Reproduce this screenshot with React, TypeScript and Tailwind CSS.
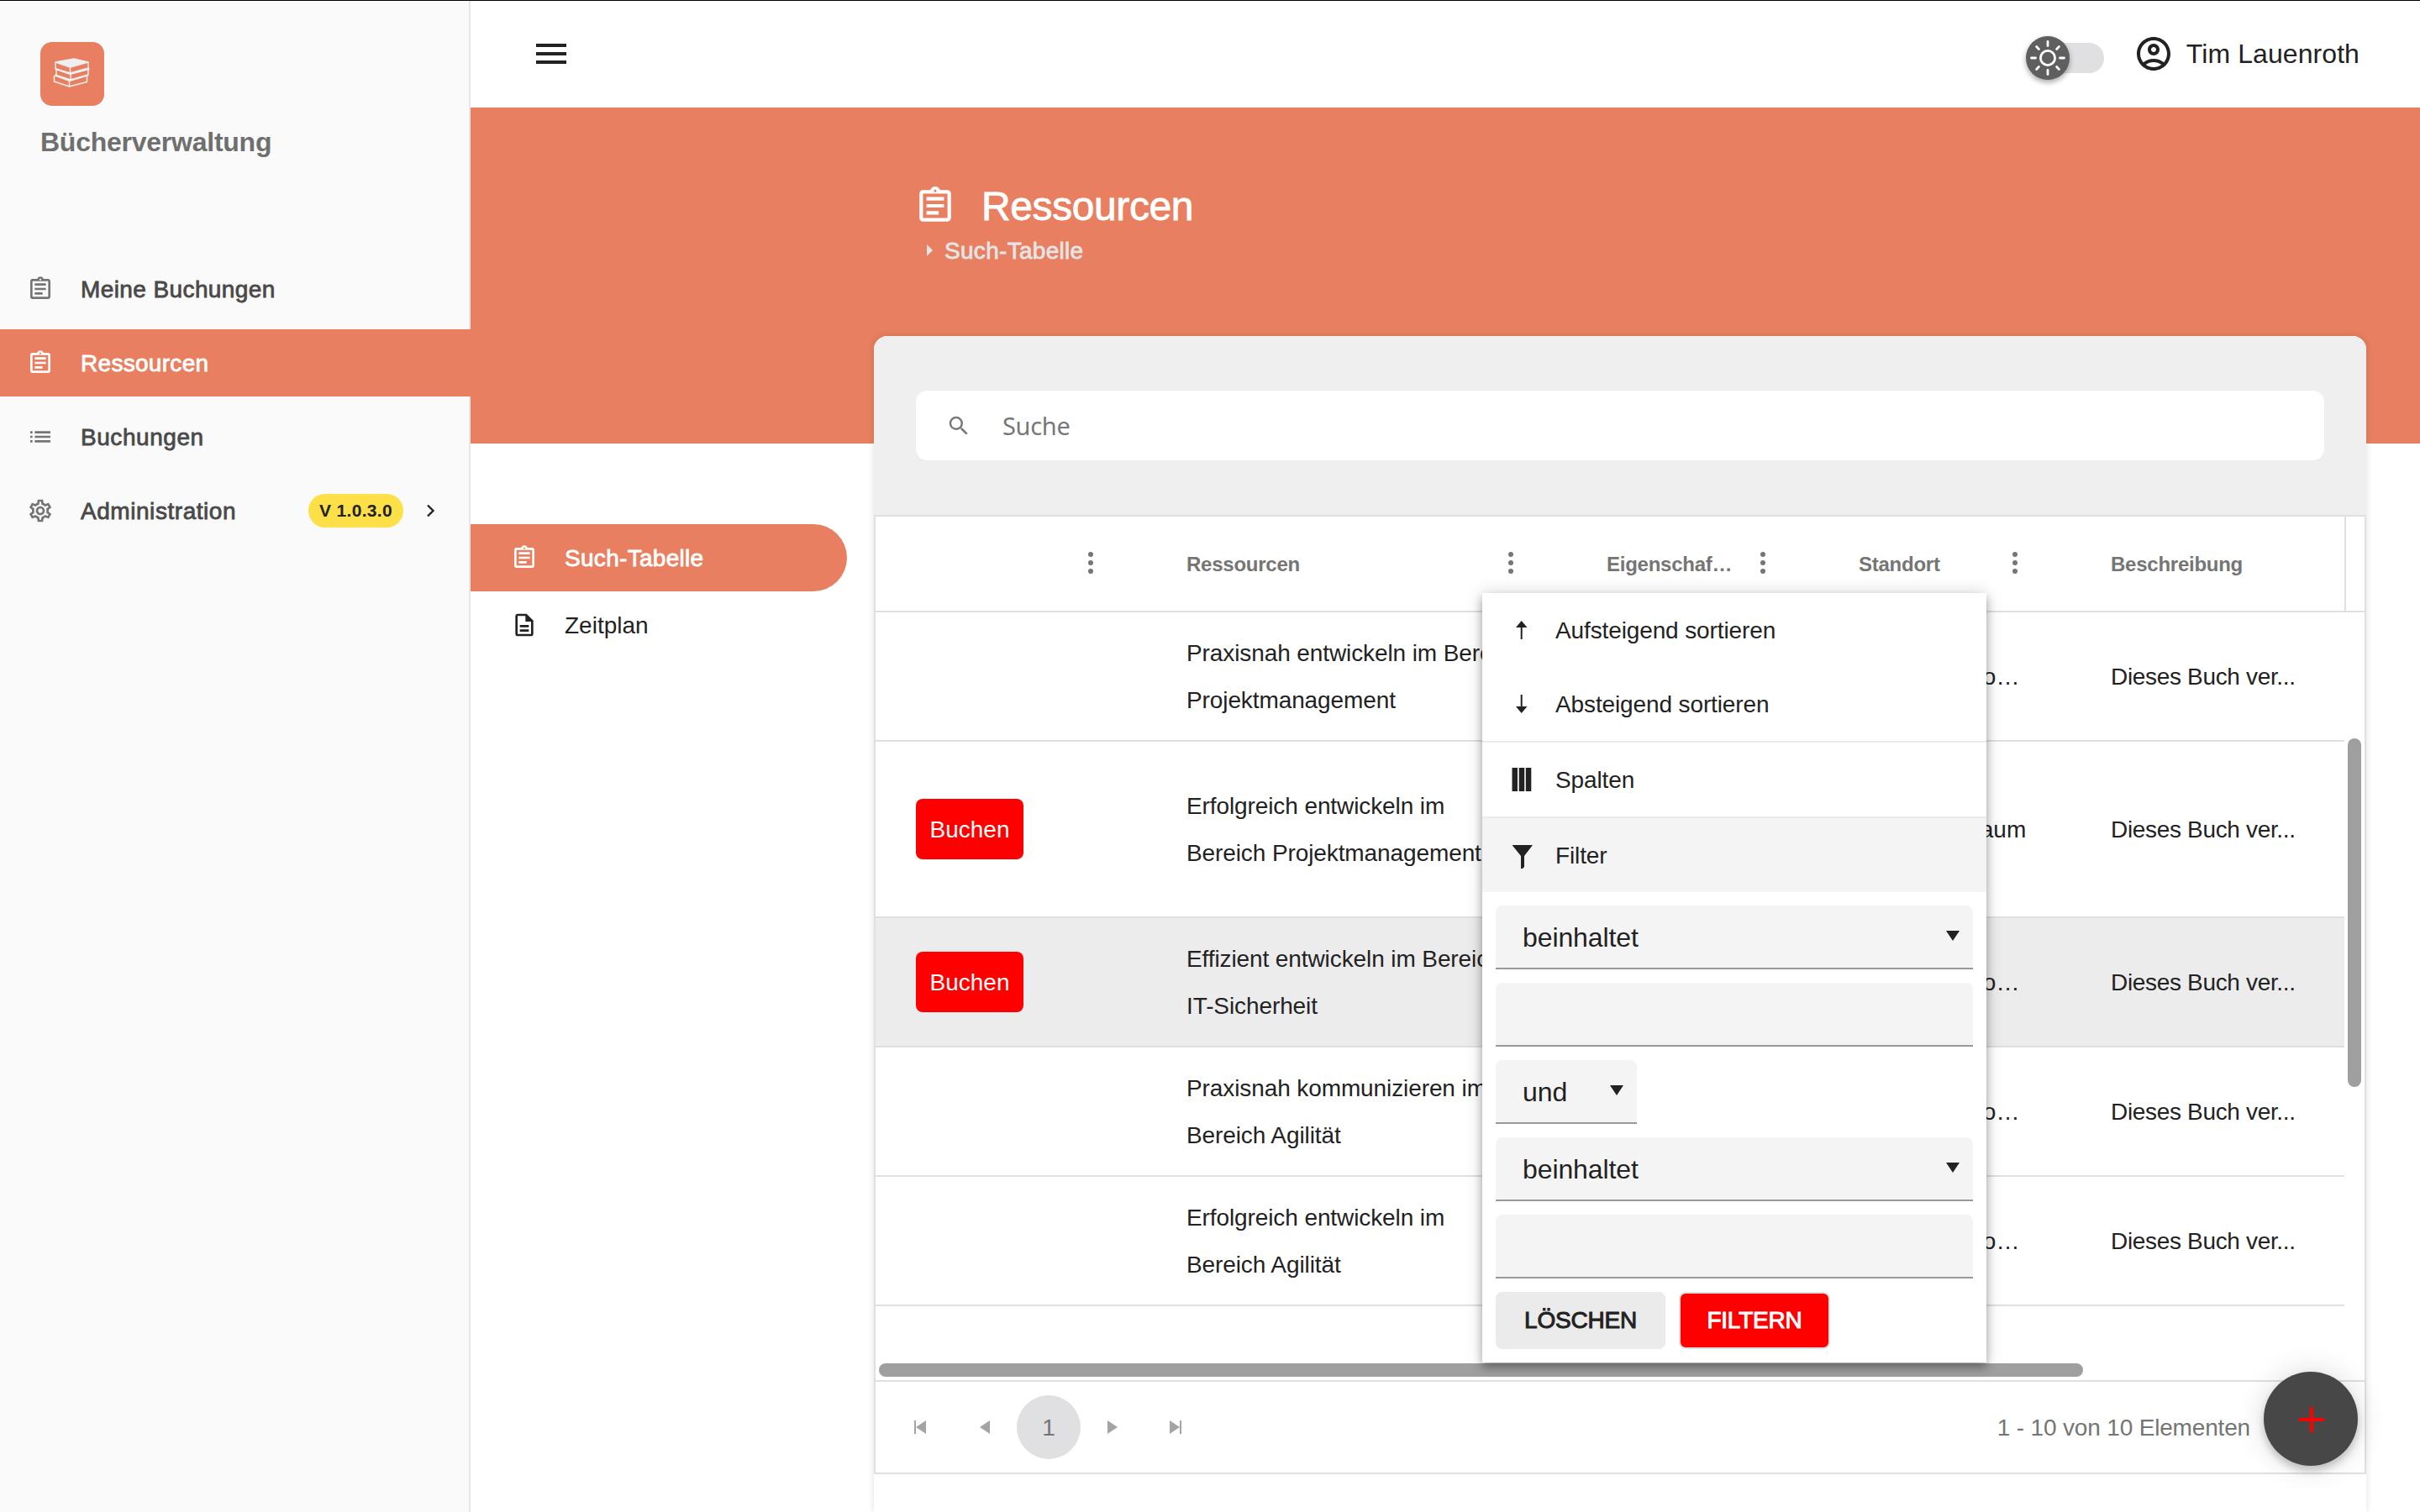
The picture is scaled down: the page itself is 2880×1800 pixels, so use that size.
import React from 'react';
import {
  MdList,
  MdMenu,
  MdOutlineAccountCircle,
  MdOutlineAssignment,
  MdOutlineDescription,
  MdOutlineSettings,
  MdSearch,
} from 'react-icons/md';

interface Row {
  id: string;
  lines: [string, string];
  bookable: boolean;
  location: string;
  height: string;
  selected?: boolean;
}

const rows: Row[] = [
  { id: 'r1', lines: ['Praxisnah entwickeln im Bereich', 'Projektmanagement'], bookable: false, location: 'Softwarelabo…', height: 'h-[154px]' },
  { id: 'r2', lines: ['Erfolgreich entwickeln im', 'Bereich Projektmanagement'], bookable: true, location: 'Bibliotheksraum', height: 'h-[210px]' },
  { id: 'r3', lines: ['Effizient entwickeln im Bereich', 'IT-Sicherheit'], bookable: true, location: 'Softwarelabo…', height: 'h-[154px]', selected: true },
  { id: 'r4', lines: ['Praxisnah kommunizieren im', 'Bereich Agilität'], bookable: false, location: 'Softwarelabo…', height: 'h-[154px]' },
  { id: 'r5', lines: ['Erfolgreich entwickeln im', 'Bereich Agilität'], bookable: false, location: 'Softwarelabo…', height: 'h-[154px]' },
];

const gridCols = 'grid grid-cols-[321px_500px_300px_300px_329px]';
const medium = '[-webkit-text-stroke:0.8px_currentColor]';

const BooksLogo: React.FC = () => (
  <div className="flex size-[76px] items-center justify-center rounded-[14px] bg-[#e77f60]">
    <svg width="76" height="76" viewBox="0 0 76 76" fill="none" stroke="#efefef" strokeWidth="1.5" strokeLinejoin="round">
      <path d="M18 24 L40 20 L57 24 L35.5 30 Z" fill="#efefef" />
      <path d="M18 24 V32 L35.5 37 L57 31 V24 M35.5 30 V37" />
      <path d="M18 32 L35.5 38 L58.5 32" strokeWidth="2.2" />
      <path d="M19 33 V39.5 L36 45 L57 39 V32 M36 38 V45" />
      <path d="M17 39.5 L35 46 L56.5 39.5" strokeWidth="2.2" />
      <path d="M16.5 40 V47 L34.5 53 L55.5 47.5 V40 M34.5 46 V53" />
    </svg>
  </div>
);

const Sidebar: React.FC = () => {
  const item = 'flex h-20 items-center pl-8 text-[28px] text-[#494949]';
  return (
    <aside className="flex w-[560px] shrink-0 flex-col bg-[#fafafa] shadow-[inset_-2px_0_0_#e6e6e6]">
      <div className="flex flex-col px-12 pt-[49px]">
        <BooksLogo />
        <h1 className="mt-[24px] text-[32px] leading-[38px] font-bold tracking-[-0.25px] text-[#6f6f6f]">Bücherverwaltung</h1>
      </div>
      <nav className="mt-[116px] flex flex-col gap-2">
        <a className={item}>
          <MdOutlineAssignment className="size-8 text-[#757575]" />
          <span className={`mt-0.5 ml-8 tracking-[0.4px] ${medium}`}>Meine Buchungen</span>
        </a>
        <a className="flex h-20 items-center bg-[#e77f60] pl-8 text-[28px] text-white">
          <MdOutlineAssignment className="size-8" />
          <span className={`mt-0.5 ml-8 tracking-[0.3px] ${medium}`}>Ressourcen</span>
        </a>
        <a className={item}>
          <MdList className="size-8 text-[#757575]" />
          <span className={`mt-0.5 ml-8 tracking-[0.55px] ${medium}`}>Buchungen</span>
        </a>
        <a className={item}>
          <MdOutlineSettings className="size-8 text-[#757575]" />
          <span className={`mt-0.5 ml-8 w-[271px] tracking-[0.55px] ${medium}`}>Administration</span>
          <span className="flex h-10 w-[113px] items-center justify-center rounded-full bg-[#fddf48] text-[21px] font-bold tracking-[0.3px] text-[#222]">
            V 1.0.3.0
          </span>
          <svg className="ml-[27px]" width="12" height="16" viewBox="0 0 12 16" fill="none" stroke="#222" strokeWidth="2.4">
            <path d="M2 1.5 L8.5 8 L2 14.5" />
          </svg>
        </a>
      </nav>
    </aside>
  );
};

const TopBar: React.FC = () => (
  <header className="flex h-[127px] items-center bg-white pb-0.5 pl-[72px]">
    <MdMenu className="size-12" />
    <div className="mt-[10px] ml-auto flex h-[52px] w-[93px] items-center">
      <div className="z-10 flex size-[52px] shrink-0 items-center justify-center rounded-full bg-[#5f5f5f] shadow-[0_3px_6px_rgba(0,0,0,0.35)]">
        <svg width="44" height="44" viewBox="0 0 44 44" fill="none" stroke="#fff" strokeWidth="2.8" strokeLinecap="round">
          <circle cx="22" cy="22" r="8.6" />
          <path d="M22 2.5v5M22 36.5v5M2.5 22h5M36.5 22h5M8.6 8.6l2.8 2.8M32.6 32.6l2.8 2.8M8.6 35.4l2.8-2.8M32.6 11.4l2.8-2.8" />
        </svg>
      </div>
      <div className="-ml-10 h-9 w-[81px] shrink-0 rounded-full bg-[#e0e0e2]" />
    </div>
    <MdOutlineAccountCircle className="ml-[35px] size-12" />
    <span className="mr-[72px] ml-[15px] text-[32px] tracking-[0.08px]">Tim Lauenroth</span>
  </header>
);

const Dots: React.FC = () => (
  <svg className="mr-[61px] shrink-0" width="8" height="28" viewBox="0 0 8 28" fill="#757575">
    <circle cx="4" cy="3" r="3" />
    <circle cx="4" cy="13" r="3" />
    <circle cx="4" cy="23" r="3" />
  </svg>
);

const HeaderCell: React.FC<{ label: string; menu?: boolean }> = ({ label, menu = true }) => (
  <div className="flex items-center justify-between pl-[49px]">
    <span className="mt-0.5 tracking-[-0.25px] whitespace-nowrap">{label}</span>
    {menu && <Dots />}
  </div>
);

const Select: React.FC<{ value: string; narrow?: boolean }> = ({ value, narrow }) => (
  <div className={`flex h-[76px] items-center justify-between rounded-t-lg border-b-2 border-[#999] bg-[#f4f4f4] pt-0.5 pr-4 pl-8 text-[32px] tracking-[-0.1px] ${narrow ? 'w-[168px]' : 'w-full'}`}>
    <span>{value}</span>
    <svg className="-mt-1" width="16" height="12" viewBox="0 0 16 12" fill="#222">
      <path d="M0 0H16L8 12Z" />
    </svg>
  </div>
);

const TextInput: React.FC = () => <div className="h-[76px] w-full rounded-t-lg border-b-2 border-[#999] bg-[#f4f4f4]" />;

const ColumnMenu: React.FC = () => (
  <div className="absolute top-[306px] left-[724px] z-20 w-[600px] bg-white text-[28px] tracking-[-0.12px] shadow-[0_6px_10px_rgba(0,0,0,0.3),0_0_20px_rgba(0,0,0,0.16)]">
    <div className="flex h-[88px] items-center gap-[23px] pl-8">
      <svg width="32" height="32" viewBox="0 0 32 32" fill="#222">
        <path d="M14.7 5 L21.5 13 H15.7 V27 H13.7 V13 H8 Z" />
      </svg>
      <span className="mt-0.5">Aufsteigend sortieren</span>
    </div>
    <div className="flex h-[88px] items-center gap-[23px] pl-8">
      <svg width="32" height="32" viewBox="0 0 32 32" fill="#222">
        <path d="M14.7 27 L21.5 19 H15.7 V5 H13.7 V19 H8 Z" />
      </svg>
      <span className="mt-0.5">Absteigend sortieren</span>
    </div>
    <div className="flex h-[90px] items-center gap-[23px] border-t-2 border-[#ebebeb] pl-8">
      <svg width="32" height="32" viewBox="0 0 32 32" fill="#222">
        <path d="M3.5 2h6.5v28h-6.5zM11.7 2h6.5v28h-6.5zM19.8 2h6.5v28h-6.5z" />
      </svg>
      <span className="mt-0.5">Spalten</span>
    </div>
    <div className="flex h-[90px] items-center gap-[23px] border-t-2 border-[#ebebeb] bg-[#f4f4f4] pl-8">
      <svg width="32" height="32" viewBox="0 0 32 32" fill="#222">
        <path d="M3.5 4H28L18 17V30L14 34V17Z" />
      </svg>
      <span className="mt-0.5">Filter</span>
    </div>
    <div className="flex flex-col gap-4 p-4">
      <Select value="beinhaltet" />
      <TextInput />
      <Select value="und" narrow />
      <Select value="beinhaltet" />
      <TextInput />
      <div className="flex gap-4">
        <button className="h-[68px] w-[202px] rounded-lg bg-[#ebebeb] tracking-[-0.2px] [-webkit-text-stroke:1px_currentColor]">LÖSCHEN</button>
        <button className="h-[68px] w-[180px] rounded-lg border-2 border-[#e0e0e0] bg-[#ff0000] tracking-[-0.2px] text-white [-webkit-text-stroke:1px_currentColor]">FILTERN</button>
      </div>
    </div>
  </div>
);

const pagerIcons = {
  first: 'M0 0h2v16h-2zM14 0v16L2 8z',
  prev: 'M14 0v16L2 8z',
  next: 'M2 0v16L14 8z',
  last: 'M0 0v16L12 8zM12 0h2v16h-2z',
};

const PagerButton: React.FC<{ icon: keyof typeof pagerIcons }> = ({ icon }) => (
  <button className="flex size-[76px] items-center justify-center pr-0.5">
    <svg width="14" height="16" viewBox="0 0 14 16" fill="#a4a4a4">
      <path d={pagerIcons[icon]} />
    </svg>
  </button>
);

const ResourceGrid: React.FC = () => (
  <section className="relative h-[1400px] w-[1776px] rounded-t-2xl bg-white shadow-[0_0_8px_rgba(0,0,0,0.12)]">
    <div className="flex h-[213px] flex-col rounded-t-2xl bg-[#efefef] px-[50px] pt-[65px]">
      <div className="flex h-[83px] items-center rounded-[14px] bg-white pl-[36px] text-[#777]">
        <MdSearch className="size-[30px]" />
        <span className="ml-[37px] font-['Noto_Sans',sans-serif] text-[29px] tracking-[-0.3px]">Suche</span>
      </div>
    </div>

    <div className="border-2 border-[#e0e0e0]">
      <div className={`${gridCols} h-[114px] border-b-2 border-[#e0e0e0] text-2xl font-bold text-[#757575]`}>
        <HeaderCell label="" />
        <HeaderCell label="Ressourcen" />
        <HeaderCell label="Eigenschaf…" />
        <HeaderCell label="Standort" />
        <div className="flex border-r-2 border-[#e0e0e0]">
          <HeaderCell label="Beschreibung" menu={false} />
        </div>
      </div>

      <div className="flex h-[914px]">
        <div className="w-[1748px]">
          {rows.map((row) => (
            <div key={row.id} className={`${gridCols} ${row.height} items-center border-b-2 border-[#e0e0e0] text-[28px] ${row.selected ? 'bg-[#ececec]' : ''}`}>
              <div className="pl-12">
                {row.bookable && <button className="h-[72px] w-32 rounded-lg bg-[#ff0000] pt-0.5 text-white">Buchen</button>}
              </div>
              <div className="pt-0.5 pl-[49px] leading-[56px] tracking-[-0.1px] whitespace-nowrap">
                <p>{row.lines[0]}</p>
                <p>{row.lines[1]}</p>
              </div>
              <div />
              <div className="pt-0.5 pl-[49px] whitespace-nowrap">{row.location}</div>
              <div className="pt-0.5 pl-[49px] tracking-[-0.33px]">Dieses Buch ver...</div>
            </div>
          ))}
          <div className="mt-[68px] ml-1 h-4 w-[1433px] rounded-full bg-[#9f9f9f]" />
        </div>
        <div className="mt-[150px] ml-1 h-[415px] w-4 rounded-full bg-[#9f9f9f]" />
      </div>

      <div className="flex h-[110px] items-center border-t-2 border-[#e0e0e0] pl-4 text-[28px] text-[#757575]">
        <PagerButton icon="first" />
        <PagerButton icon="prev" />
        <span className="flex size-[76px] items-center justify-center rounded-full bg-[#e0e0e2] pt-0.5">1</span>
        <PagerButton icon="next" />
        <PagerButton icon="last" />
        <span className="mt-0.5 mr-[136px] ml-auto tracking-[-0.17px]">1 - 10 von 10 Elementen</span>
      </div>
    </div>

    <ColumnMenu />
    <button className="absolute top-[1233px] right-[10px] flex size-28 items-center justify-center rounded-full bg-[#474747] pt-0.5 pl-0.5 shadow-[0_6px_10px_rgba(0,0,0,0.2),0_0_36px_rgba(0,0,0,0.14)]">
      <svg width="30" height="30" viewBox="0 0 30 30" fill="#ff0000">
        <path d="M13 0h4v13h13v4H17v13h-4V17H0v-4h13z" />
      </svg>
    </button>
  </section>
);

const App: React.FC = () => (
  <div className="flex h-[1800px] w-[2880px] overflow-hidden border-t border-black bg-white font-['Liberation_Sans',Arial,sans-serif] text-[#222]">
    <Sidebar />
    <main className="flex w-[2320px] flex-col">
      <TopBar />
      <div className="h-[400px] shrink-0 bg-[#e77f60] pt-[88px] pl-[528px] text-white">
        <h2 className="flex h-[58px] items-center">
          <MdOutlineAssignment className="size-[50px]" />
          <span className={`mt-0.5 ml-[30px] text-[48px] tracking-[-0.4px] ${medium}`}>Ressourcen</span>
        </h2>
        <div className="mt-[6px] flex h-9 items-center pl-[15px] text-[28px] text-[#e4e4e4]">
          <svg width="7" height="14" viewBox="0 0 7 14" fill="currentColor">
            <path d="M0 0L7 7L0 14Z" />
          </svg>
          <span className={`mt-0.5 ml-[14px] tracking-[0.3px] ${medium}`}>Such-Tabelle</span>
        </div>
      </div>
      <div className="-mt-32 flex">
        <nav className="flex w-[480px] flex-col pt-56 text-[28px]">
          <a className="flex h-20 w-[448px] items-center rounded-r-full bg-[#e77f60] pl-12 text-white">
            <MdOutlineAssignment className="size-8" />
            <span className={`mt-0.5 ml-8 tracking-[0.3px] ${medium}`}>Such-Tabelle</span>
          </a>
          <a className="flex h-20 items-center pl-12">
            <MdOutlineDescription className="size-8" />
            <span className="mt-0.5 ml-8">Zeitplan</span>
          </a>
        </nav>
        <ResourceGrid />
      </div>
    </main>
  </div>
);

export default App;
